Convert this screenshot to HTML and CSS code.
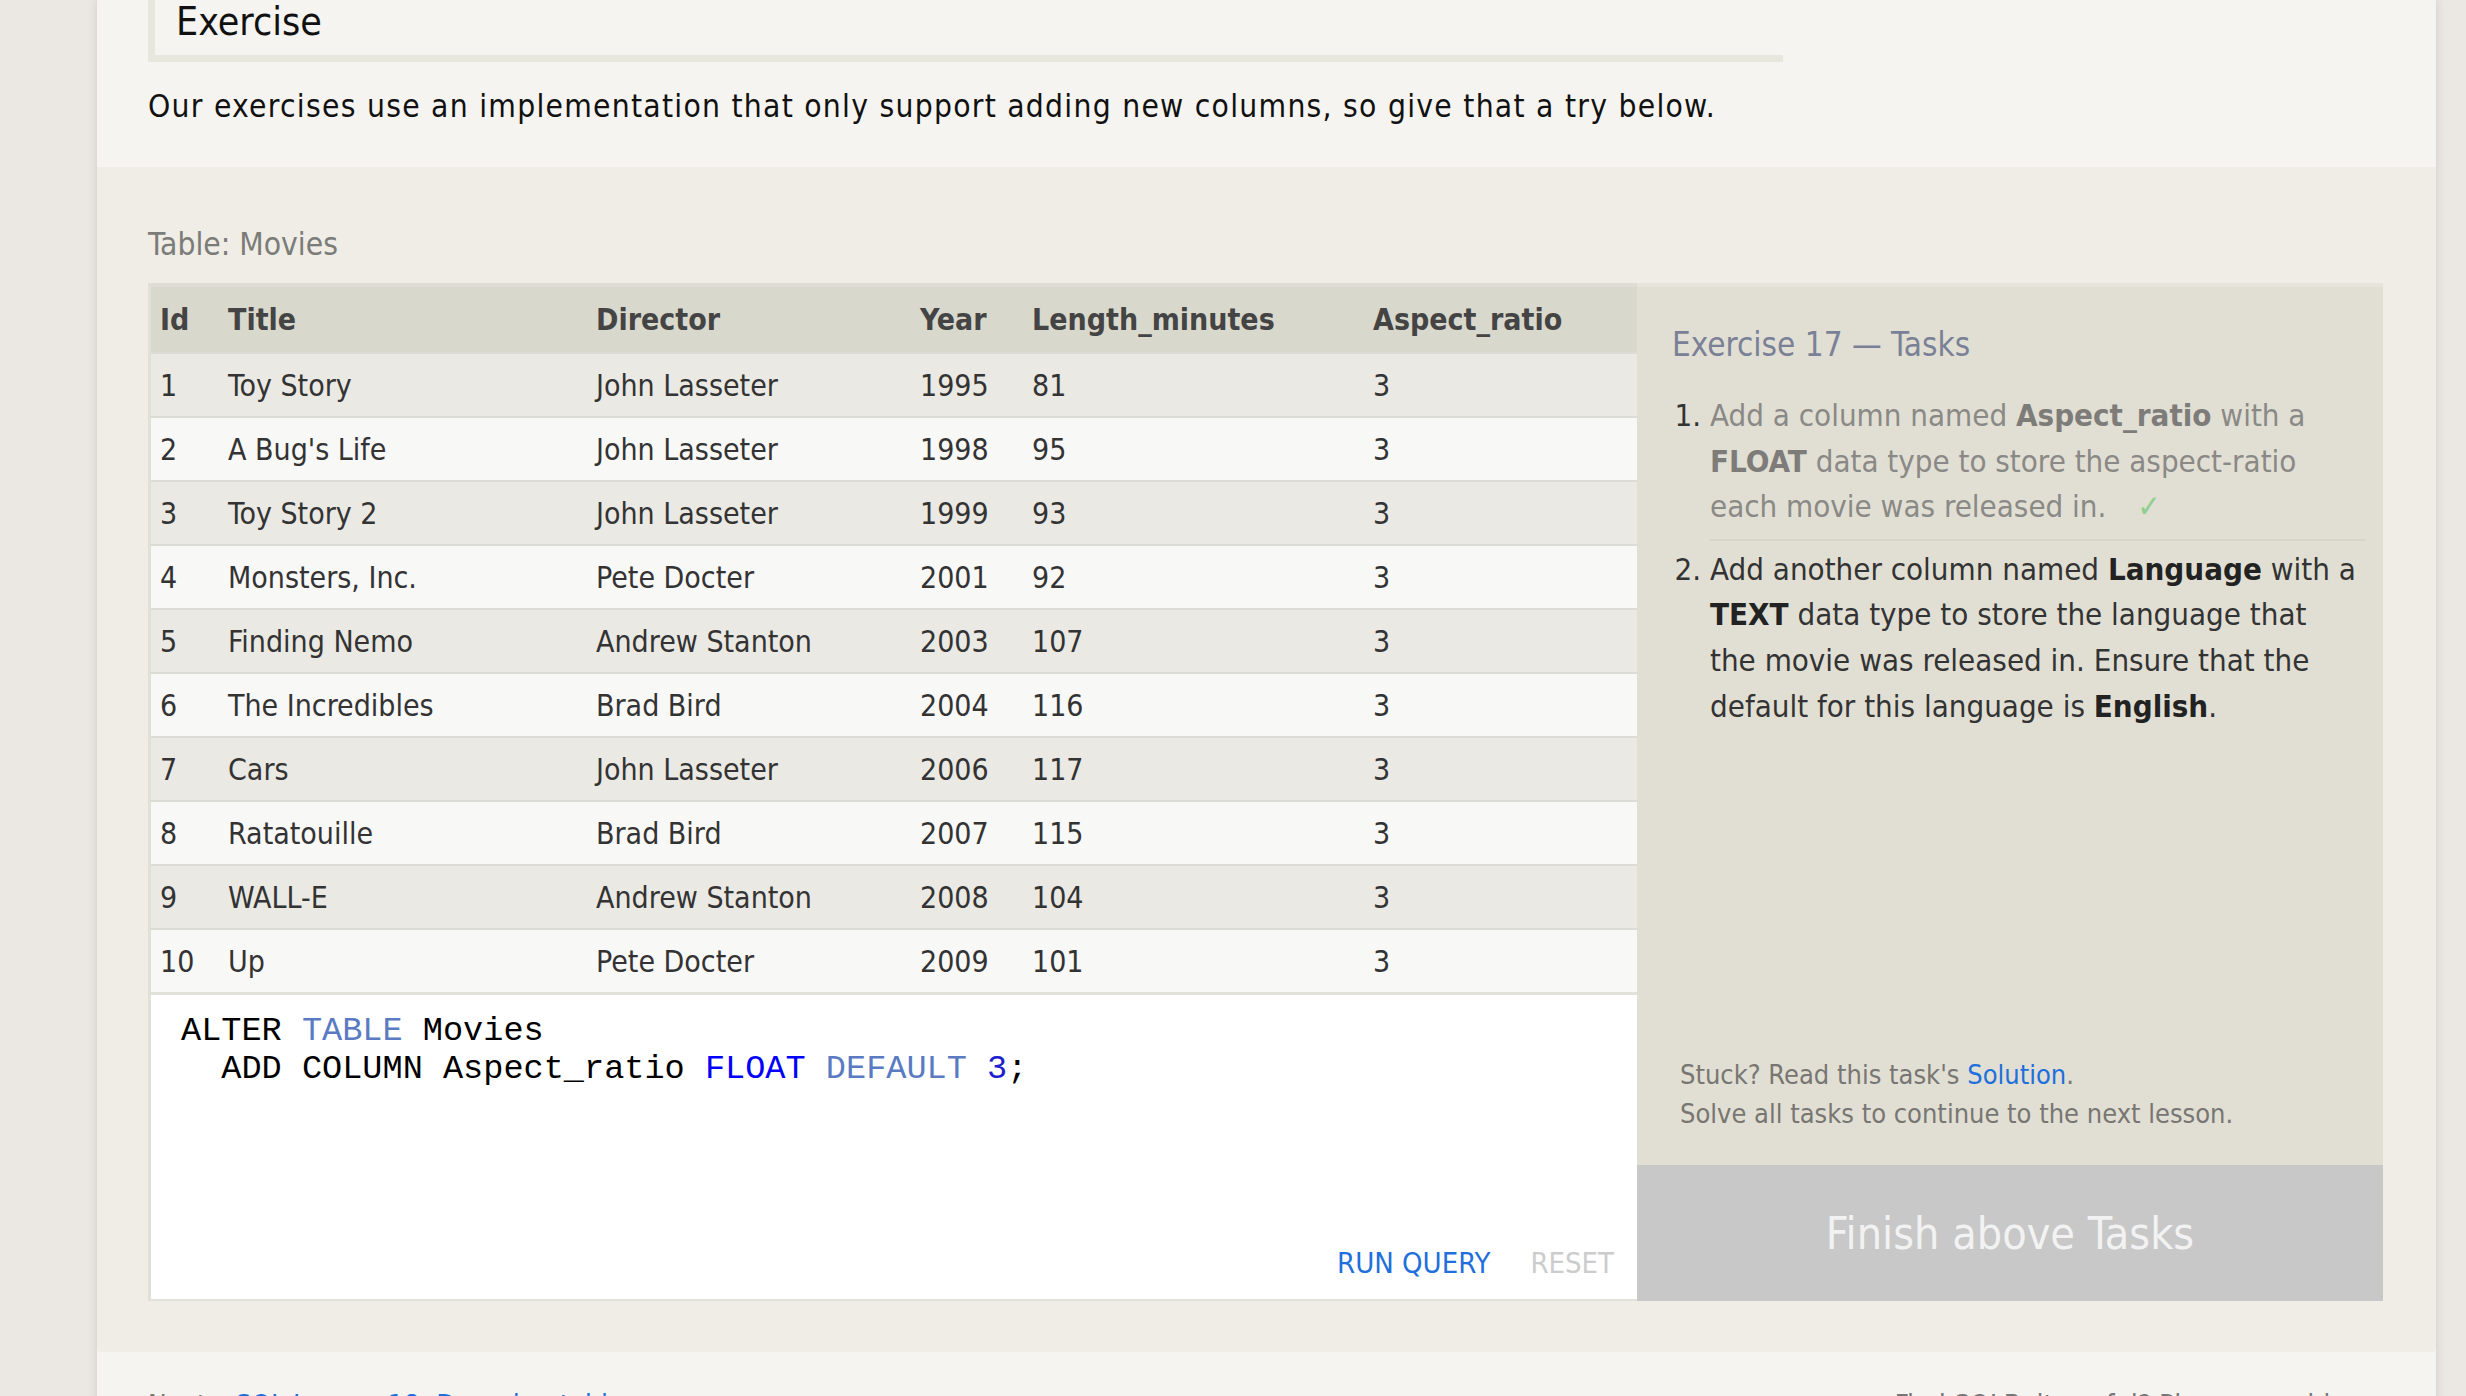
FILE: index.html
```html
<!DOCTYPE html>
<html lang="en">
<head>
<meta charset="utf-8">
<title>SQL Lesson 17: Altering tables</title>
<link rel="stylesheet" href="styles.css">
</head>
<body>
<div class="page">
  <div class="lesson">
    <div class="ex-heading"><h2>Exercise</h2></div>
    <p class="intro">Our exercises use an implementation that only support adding new columns, so give that a try below.</p>
  </div>

  <section class="exercise">
    <div class="table-caption">Table: Movies</div>
    <div class="workspace">
      <div class="sql-side">
        <table class="movies">
          <colgroup>
            <col class="c-id"><col class="c-title"><col class="c-dir"><col class="c-year"><col class="c-len"><col class="c-asp">
          </colgroup>
          <thead>
            <tr><th>Id</th><th>Title</th><th>Director</th><th>Year</th><th>Length_minutes</th><th>Aspect_ratio</th></tr>
          </thead>
          <tbody>
            <tr><td>1</td><td>Toy Story</td><td>John Lasseter</td><td>1995</td><td>81</td><td>3</td></tr>
            <tr><td>2</td><td>A Bug's Life</td><td>John Lasseter</td><td>1998</td><td>95</td><td>3</td></tr>
            <tr><td>3</td><td>Toy Story 2</td><td>John Lasseter</td><td>1999</td><td>93</td><td>3</td></tr>
            <tr><td>4</td><td>Monsters, Inc.</td><td>Pete Docter</td><td>2001</td><td>92</td><td>3</td></tr>
            <tr><td>5</td><td>Finding Nemo</td><td>Andrew Stanton</td><td>2003</td><td>107</td><td>3</td></tr>
            <tr><td>6</td><td>The Incredibles</td><td>Brad Bird</td><td>2004</td><td>116</td><td>3</td></tr>
            <tr><td>7</td><td>Cars</td><td>John Lasseter</td><td>2006</td><td>117</td><td>3</td></tr>
            <tr><td>8</td><td>Ratatouille</td><td>Brad Bird</td><td>2007</td><td>115</td><td>3</td></tr>
            <tr><td>9</td><td>WALL-E</td><td>Andrew Stanton</td><td>2008</td><td>104</td><td>3</td></tr>
            <tr><td>10</td><td>Up</td><td>Pete Docter</td><td>2009</td><td>101</td><td>3</td></tr>
          </tbody>
        </table>
        <div class="editor">
          <pre class="code">ALTER <span class="kw">TABLE</span> Movies
  ADD COLUMN Aspect_ratio <span class="type">FLOAT</span> <span class="kw">DEFAULT</span> <span class="num">3</span>;</pre>
          <div class="editor-actions">
            <span class="btn-run">RUN QUERY</span>
            <span class="btn-reset">RESET</span>
          </div>
        </div>
      </div>

      <aside class="tasks-panel">
        <h3 class="tasks-title">Exercise 17 — Tasks</h3>
        <ol class="tasks">
          <li class="task done">Add a column named <b>Aspect_ratio</b> with a<br><b>FLOAT</b> data type to store the aspect-ratio<br>each movie was released in. <span class="check">✓</span></li>
          <li class="task">Add another column named <b>Language</b> with a<br><b>TEXT</b> data type to store the language that<br>the movie was released in. Ensure that the<br>default for this language is <b>English</b>.</li>
        </ol>
        <div class="stuck">
          <div>Stuck? Read this task's <a class="link" href="#">Solution</a>.</div>
          <div>Solve all tasks to continue to the next lesson.</div>
        </div>
        <div class="finish">Finish above Tasks</div>
      </aside>
    </div>
  </section>

  <div class="footer">
    <div class="next">Next – <a class="link" href="#">SQL Lesson 18: Dropping tables</a></div>
    <div class="support">Find SQLBolt useful? Please consider</div>
  </div>
</div>
</body>
</html>
```
FILE: styles.css
```css
html, body {
  margin: 0;
  padding: 0;
  height: 100%;
  overflow: hidden;
}
body {
  background: #ebe7e3;
  font-family: "DejaVu Sans Condensed", "DejaVu Sans", sans-serif;
  color: #111;
}
.page {
  margin-left: 97px;
  width: 2339px;
  min-height: 1500px;
  background: #f5f4f0;
  box-shadow: -3px 0 8px rgba(0, 0, 0, 0.06), 3px 0 8px rgba(0, 0, 0, 0.06);
}
.lesson {
  padding-left: 51px;
}
.ex-heading {
  width: 1607px;
  margin-top: -1px;
  padding: 0 0 10px 21px;
  border-left: 7px solid #e8e7de;
  border-bottom: 7px solid #e8e7de;
}
.ex-heading h2 {
  margin: 0;
  font-size: 39px;
  line-height: 46px;
  font-weight: normal;
  color: #111;
}
.intro {
  margin: 20px 0 0;
  padding-bottom: 37px;
  font-size: 31.5px;
  line-height: 48px;
  letter-spacing: 1.25px;
  color: #111;
}
.exercise {
  background: #efede6;
  padding: 55px 52px 51px 51px;
  border-radius: 0 0 4px 4px;
  width: 2236px;
}
.table-caption {
  font-size: 31.5px;
  line-height: 45px;
  color: #7b7b78;
  margin-bottom: 16px;
}
.workspace {
  display: flex;
  align-items: stretch;
}
.sql-side {
  width: 1486px;
  border-left: 3px solid #e0dfd8;
  border-top: 4px solid #dddcd5;
  border-bottom: 2px solid #e3e2da;
  display: flex;
  flex-direction: column;
}
.movies {
  width: 100%;
  border-collapse: collapse;
  table-layout: fixed;
  font-size: 30px;
}
.c-id { width: 68px; }
.c-title { width: 368px; }
.c-dir { width: 324px; }
.c-year { width: 112px; }
.c-len { width: 341px; }
.c-asp { width: 273px; }
.movies th {
  text-align: left;
  font-weight: bold;
  color: #444;
  background: #d9d8cd;
  height: 65px;
  padding: 0 0 0 9px;
  vertical-align: middle;
}
.movies td {
  height: 62px;
  padding: 0 0 0 9px;
  border-top: 2px solid #dcdbd5;
  color: #333;
  vertical-align: middle;
  white-space: nowrap;
}
.movies tbody tr:nth-child(odd) td { background: #eae9e3; }
.movies tbody tr:nth-child(even) td { background: #f8f8f7; }

.editor {
  background: #fff;
  border-top: 3px solid #e3e2da;
  height: 304px;
  display: flex;
  flex-direction: column;
}
.code {
  margin: 0;
  padding: 17px 0 0 30px;
  font-family: "Courier New", "Nimbus Mono PS", "FreeMono", "Liberation Mono", monospace;
  font-size: 33.6px;
  line-height: 38px;
  color: #000;
}
.kw { color: #5a7bc2; }
.type { color: #0000ff; }
.num { color: #1e1ed0; }
.editor-actions {
  margin-top: auto;
  display: flex;
  justify-content: flex-end;
  gap: 40px;
  padding: 0 23px 16px 0;
  font-size: 29px;
  line-height: 40px;
}
.btn-run { color: #1f6fdc; }
.btn-reset { color: #cccccc; }

.tasks-panel {
  width: 746px;
  background: #e1dfd4;
  border-top: 4px solid #e6e5dc;
  display: flex;
  flex-direction: column;
}
.tasks-title {
  margin: 0;
  padding: 34px 35px 0;
  font-size: 33px;
  line-height: 48px;
  font-weight: normal;
  color: #7a8196;
}
.tasks {
  margin: 24px 17px 0 35px;
  padding-left: 38px;
  font-size: 31px;
  line-height: 45.6px;
  color: #333;
}
.task { white-space: nowrap; }
.task b { color: #222; }
.task.done {
  color: #8a8986;
  padding-bottom: 9px;
  border-bottom: 2px solid #d6d5ca;
  margin-bottom: 6px;
}
.task.done b { color: #7d7c79; }
.task.done::marker { color: #333; }
.check {
  color: #8fd08f;
  margin-left: 22px;
}
.stuck {
  margin-top: auto;
  padding: 0 0 32px 43px;
  font-size: 27px;
  line-height: 39px;
  color: #787672;
}
.link {
  color: #1f6fdc;
  text-decoration: none;
}
.finish {
  height: 136px;
  background: #c8c8c8;
  color: #f2f2f2;
  font-size: 44.5px;
  display: flex;
  align-items: center;
  justify-content: center;
}
.footer {
  display: flex;
  justify-content: space-between;
  padding: 33px 80px 0 51px;
  font-size: 28px;
  line-height: 42px;
  color: #777;
}
```
